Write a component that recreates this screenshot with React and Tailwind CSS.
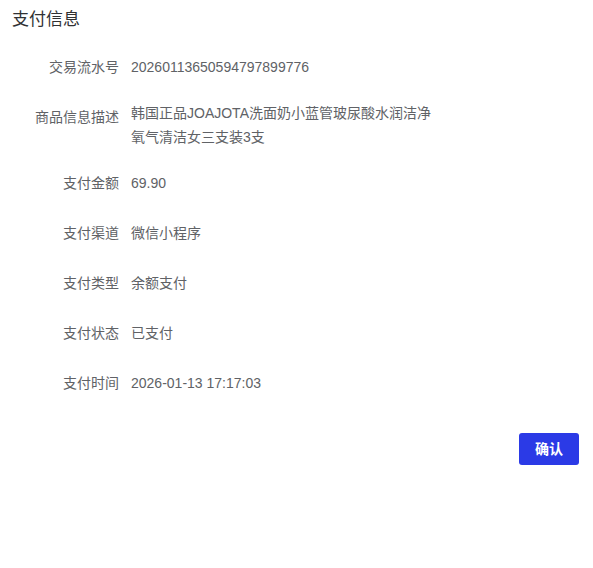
import React from 'react';

const ROWS = [
  { label: '交易流水号', value: '20260113650594797899776' },
  { label: '商品信息描述', value: '韩国正品JOAJOTA洗面奶小蓝管玻尿酸水润洁净氧气清洁女三支装3支', multi: true },
  { label: '支付金额', value: '69.90' },
  { label: '支付渠道', value: '微信小程序' },
  { label: '支付类型', value: '余额支付' },
  { label: '支付状态', value: '已支付' },
  { label: '支付时间', value: '2026-01-13 17:17:03' },
];

export default function App() {
  return (
    <div
      className="min-h-screen bg-white pl-3 pr-[14px] pt-2 text-[#606266]"
      style={{ fontFamily: '"Liberation Sans", "Noto Sans CJK SC", sans-serif' }}
    >
      <h2 className="text-[17px] leading-6 text-[#303133]">支付信息</h2>

      <div className="mt-[19px] -ml-3 flex flex-col gap-[18px]">
        {ROWS.map((row) => (
          <div key={row.label} className="flex text-sm">
            <div className="w-[119px] shrink-0 text-right leading-8">{row.label}</div>
            <div className={row.multi ? 'ml-3 w-[310px] leading-6' : 'ml-3 leading-8'}>
              {row.value}
            </div>
          </div>
        ))}
      </div>

      <div className="mt-[34px] flex justify-end">
        <button className="h-8 w-[60px] rounded-[3px] bg-[#2b3ae6] text-sm font-bold text-white">
          确认
        </button>
      </div>
    </div>
  );
}
